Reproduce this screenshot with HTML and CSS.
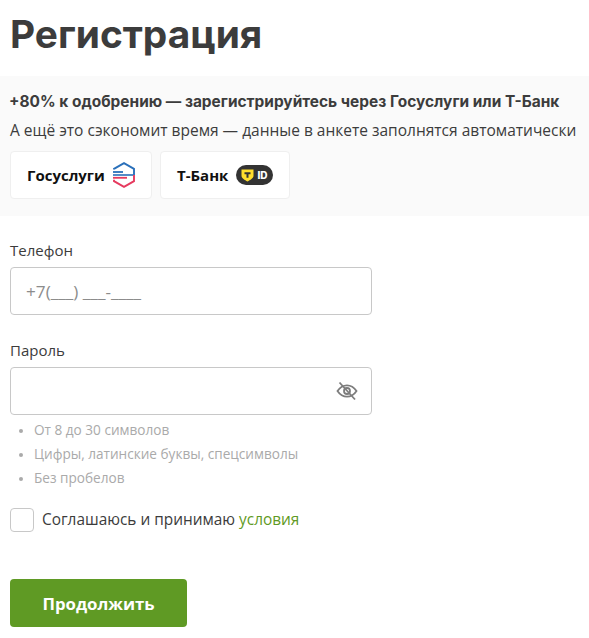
FILE: index.html
```html
<!DOCTYPE html>
<html lang="ru">
<head>
    <meta charset="UTF-8">
    <title>Регистрация</title>
    <link rel="stylesheet" href="styles.css">
</head>
<body>
    <h1 class="title">Регистрация</h1>
    <section class="promo">
        <p class="promo-head">+80% к одобрению — зарегистрируйтесь через Госуслуги или Т-Банк</p>
        <p class="promo-text">А ещё это сэкономит время — данные в анкете заполнятся автоматически</p>
        <div class="providers">
            <button type="button" class="provider provider-gos">
                <span>Госуслуги</span>
                <svg class="gos-logo" width="24" height="26" viewBox="0 0 24 26" fill="none">
                    <path d="M2 7.500V6.800L12 1.200 22 6.800V13" stroke="#2a70ba" stroke-width="1.900"/>
                    <path d="M22 13v6.200L12 24.800 2 19.200V17.800" stroke="#e63a5f" stroke-width="1.900"/>
                    <path d="M1 10h10" stroke="#2a70ba" stroke-width="1.800"/>
                    <path d="M1 13h20" stroke="#2a70ba" stroke-width="1.600"/>
                    <path d="M1 15.800h14" stroke="#e63a5f" stroke-width="1.800"/>
                </svg>
            </button>
            <button type="button" class="provider provider-bank">
                <span>Т-Банк</span>
                <span class="tid">
                    <svg width="13" height="13" viewBox="0 0 13 13">
                        <path d="M0.500 0.500h12v6.200c0 2.400-3.400 4.300-6 5.800-2.600-1.500-6-3.400-6-5.800z" fill="#ffdd2d"/>
                        <path d="M3.500 3.200h6v2h-2v3.600h-2V5.200h-2z" fill="#333"/>
                    </svg>
                    <span class="tid-text">ID</span>
                </span>
            </button>
        </div>
    </section>
    <form class="form">
        <div class="field">
            <label class="field-label" for="phone">Телефон</label>
            <input class="field-input" id="phone" type="text" placeholder="+7(___) ___-____">
        </div>
        <div class="field field-password">
            <label class="field-label" for="password">Пароль</label>
            <div class="input-wrap">
                <input class="field-input" id="password" type="password">
                <svg class="eye" width="22" height="20" viewBox="0 0 22 20" fill="none" stroke="#7d7d7d" stroke-width="1.800">
                    <path d="M1.500 10c2.500-3.800 5.600-5.700 9.500-5.700s7 1.900 9.500 5.700c-2.500 3.800-5.600 5.700-9.500 5.700S4 13.800 1.500 10z"/>
                    <circle cx="11" cy="10" r="3"/>
                    <path d="M3.500 1.500L19 18.500"/>
                </svg>
            </div>
        </div>
        <ul class="hints">
            <li>От 8 до 30 символов</li>
            <li>Цифры, латинские буквы, спецсимволы</li>
            <li>Без пробелов</li>
        </ul>
        <label class="agree">
            <input class="agree-box" type="checkbox">
            <span>Соглашаюсь и принимаю <a href="#" class="agree-link">условия</a></span>
        </label>
        <button type="button" class="submit">Продолжить</button>
    </form>
</body>
</html>
```
FILE: styles.css
```css
body {
    font-family: "Open Sans", sans-serif;
    color: #3c3c3c;
    background: #fff;
    margin: 0;
    padding: 0;
    overflow: hidden;
}

.title {
    font-family: Inter, sans-serif;
    font-size: 38.800px;
    font-weight: 700;
    line-height: 46px;
    margin: 0;
    padding: 11px 10px 19px;
    color: #3c3c3c;
}

.promo {
    background: #fafafa;
    padding: 15px 10px 17px;
}

.promo-head {
    font-family: Inter, sans-serif;
    font-size: 15.450px;
    font-weight: 700;
    line-height: 22px;
    margin: 0 0 0 -1px;
    white-space: nowrap;
}

.promo-text {
    font-size: 15.500px;
    line-height: 22px;
    margin: 6px 0 10px;
    white-space: nowrap;
}

.providers {
    display: flex;
    gap: 8px;
}

.provider {
    display: flex;
    align-items: center;
    height: 48px;
    padding: 0;
    background: #fff;
    border: 1px solid #efefef;
    border-radius: 4px;
    font-family: "Open Sans", sans-serif;
    font-size: 15px;
    font-weight: 700;
    color: #111;
}

.provider-gos {
    width: 142px;
    padding-left: 16px;
    gap: 7px;
}

.provider-bank {
    width: 130px;
    padding-left: 16px;
    gap: 8px;
}

.tid {
    display: flex;
    align-items: center;
    gap: 3px;
    width: 37px;
    height: 20px;
    padding-left: 5px;
    box-sizing: border-box;
    background: #333;
    border-radius: 10px;
}

.tid-text {
    font-family: Inter, sans-serif;
    font-size: 10px;
    font-weight: 800;
    color: #fff;
}

.form {
    padding: 0 10px;
    width: 362px;
}

.field {
    margin-top: 23px;
}

.field-password {
    margin-top: 24px;
}

.field-label {
    display: block;
    font-size: 15px;
    line-height: 22px;
    margin-bottom: 6px;
}

.input-wrap {
    position: relative;
}

.field-input {
    display: block;
    width: 100%;
    height: 48px;
    box-sizing: border-box;
    padding: 0 15px;
    border: 1px solid #c8c8c8;
    border-radius: 4px;
    background: #fff;
    font-family: "Open Sans", sans-serif;
    font-size: 17.200px;
}

.field-input::placeholder {
    color: #8c8c8c;
    opacity: 1;
}

.eye {
    position: absolute;
    right: 14px;
    top: 14px;
}

.hints {
    margin: 3px 0 0;
    padding: 0 0 0 24px;
    font-size: 13.600px;
    line-height: 24px;
    color: #aaa;
}

.hints li::marker {
    font-size: 11px;
}

.agree {
    display: flex;
    align-items: center;
    gap: 8px;
    margin-top: 18px;
    font-size: 15.400px;
    line-height: 24px;
}

.agree-box {
    appearance: none;
    width: 24px;
    height: 24px;
    margin: 0;
    background: #fff;
    border: 1px solid #c8c8c8;
    border-radius: 4px;
}

.agree-link {
    color: #5f9a24;
    text-decoration: none;
}

.submit {
    display: block;
    width: 177px;
    height: 48px;
    margin-top: 47px;
    background: #5f9a24;
    border: none;
    border-radius: 4px;
    color: #fff;
    font-family: "Open Sans", sans-serif;
    font-size: 16.800px;
    font-weight: 700;
}
```
